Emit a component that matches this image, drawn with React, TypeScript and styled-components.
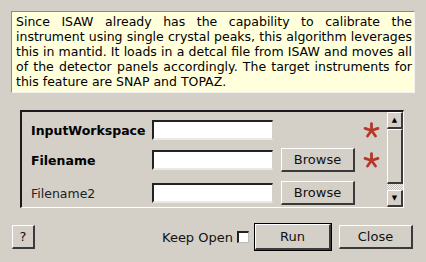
import React from "react";
import styled, { createGlobalStyle } from "styled-components";

const GlobalStyle = createGlobalStyle`
  html, body { margin: 0; padding: 0; background: #d4d0c8; }
  body { font-family: "DejaVu Sans", "Liberation Sans", sans-serif; font-size: 12px; color: #000; }
`;

const Page = styled.div`
  width: 426px;
  height: 262px;
  box-sizing: border-box;
  padding: 11px 11px 0 11px;
  display: flex;
  flex-direction: column;
  background: #d4d0c8;
`;

const Description = styled.div`
  box-sizing: border-box;
  width: 404px;
  height: 82px;
  padding: 2px 2px 0 4px;
  background: #ffffdc;
  border-top: 1px solid #8c8a85;
  border-left: 1px solid #8c8a85;
  border-right: 1px solid #f4f2ee;
  border-bottom: 1px solid #f4f2ee;
  text-align: justify;
  line-height: 15px;
  font-size: 12.5px;
`;

const Panel = styled.div`
  box-sizing: border-box;
  margin: 17px 0 0 9px;
  width: 384px;
  height: 98px;
  display: flex;
  border-top: 2px solid #1a1a1a;
  border-left: 2px solid #1a1a1a;
  border-right: 1px solid #fff;
  border-bottom: 1px solid #fff;
  overflow: hidden;
`;

const Fields = styled.div`
  flex: 1;
  display: flex;
  flex-direction: column;
  padding: 6px 0 0 9px;
`;

const Row = styled.div<{ $space: number }>`
  display: flex;
  align-items: center;
  height: 24px;
  margin-bottom: ${(p) => p.$space}px;
`;

const Label = styled.div<{ $bold?: boolean }>`
  width: 121px;
  font-size: 12.5px;
  font-weight: ${(p) => (p.$bold ? "bold" : "normal")};
  color: ${(p) => (p.$bold ? "#000" : "#222")};
`;

const Input = styled.div`
  box-sizing: border-box;
  width: 121px;
  height: 20px;
  background: #fff;
  border-top: 2px solid #222;
  border-left: 2px solid #222;
  border-right: 1px solid #d4d0c8;
  border-bottom: 2px solid #ece9e3;
`;

const Button = styled.div<{ $w: number; $h?: number; $default?: boolean }>`
  box-sizing: border-box;
  width: ${(p) => p.$w}px;
  height: ${(p) => p.$h ?? 24}px;
  display: flex;
  align-items: center;
  justify-content: center;
  background: #d4d0c8;
  border-top: 1px solid #fff;
  border-left: 1px solid #fff;
  border-right: 2px solid #3a3a3a;
  border-bottom: 2px solid #3a3a3a;
  outline: ${(p) => (p.$default ? "1px solid #000" : "none")};
  font-size: 13px;
  color: #111;
`;

const BrowseButton = styled(Button)`
  margin-left: 8px;
`;

const Star = styled.svg`
  margin-left: 8px;
  width: 17px;
  height: 17px;
`;

const Scrollbar = styled.div`
  width: 16px;
  display: flex;
  flex-direction: column;
`;

const ArrowButton = styled.div`
  box-sizing: border-box;
  height: 17px;
  display: flex;
  align-items: center;
  justify-content: center;
  border-top: 1px solid #fff;
  border-left: 1px solid #fff;
  border-right: 2px solid #3a3a3a;
  border-bottom: 2px solid #3a3a3a;
  font-size: 7px;
`;

const Handle = styled.div`
  box-sizing: border-box;
  height: 57px;
  border-top: 1px solid #fff;
  border-left: 1px solid #fff;
  border-right: 2px solid #3a3a3a;
  border-bottom: 2px solid #3a3a3a;
`;

const Track = styled.div`
  height: 6px;
  background-color: #ecebe8;
  background-image: repeating-conic-gradient(#c4c1bb 0 25%, #f2f1ee 0 50%);
  background-size: 2px 2px;
`;

const Footer = styled.div`
  margin-top: 16px;
  display: flex;
  align-items: center;
  padding-left: 1px;
`;

const KeepOpen = styled.div`
  margin-left: 127px;
  display: flex;
  align-items: center;
  gap: 4px;
  font-size: 13px;
  color: #111;
`;

const Check = styled.div`
  box-sizing: border-box;
  width: 12px;
  height: 12px;
  background: #fff;
  border-top: 2px solid #222;
  border-left: 2px solid #222;
  border-right: 1px solid #bbb;
  border-bottom: 1px solid #bbb;
`;

const RunButton = styled(Button)`
  margin-left: 6px;
`;

const CloseButton = styled(Button)`
  margin-left: 8px;
`;

const Asterisk = () => (
  <Star viewBox="0 0 18 18">
    {[0, 72, 144, 216, 288].map((a) => (
      <line
        key={a}
        x1="9"
        y1="9"
        x2="9"
        y2="1.8"
        stroke="#b3392b"
        strokeWidth="3"
        strokeLinecap="round"
        transform={`rotate(${a} 9 9)`}
      />
    ))}
  </Star>
);

const rows = [
  { label: "InputWorkspace", bold: true, browse: false, required: true, space: 6 },
  { label: "Filename", bold: true, browse: true, required: true, space: 9 },
  { label: "Filename2", bold: false, browse: true, required: false, space: 0 },
];

export default function App() {
  return (
    <Page>
      <GlobalStyle />
      <Description>
        Since ISAW already has the capability to calibrate the instrument using single crystal peaks, this
        algorithm leverages this in mantid. It loads in a detcal file from ISAW and moves all of the detector
        panels accordingly. The target instruments for this feature are SNAP and TOPAZ.
      </Description>
      <Panel>
        <Fields>
          {rows.map((r) => (
            <Row key={r.label} $space={r.space}>
              <Label $bold={r.bold}>{r.label}</Label>
              <Input />
              {r.browse ? <BrowseButton $w={74}>Browse</BrowseButton> : <div style={{ width: 82 }} />}
              {r.required && <Asterisk />}
            </Row>
          ))}
        </Fields>
        <Scrollbar>
          <ArrowButton>▲</ArrowButton>
          <Handle />
          <Track />
          <ArrowButton>▼</ArrowButton>
        </Scrollbar>
      </Panel>
      <Footer>
        <Button $w={23}>?</Button>
        <KeepOpen>
          Keep Open
          <Check />
        </KeepOpen>
        <RunButton $w={76} $h={26} $default>
          Run
        </RunButton>
        <CloseButton $w={74}>Close</CloseButton>
      </Footer>
    </Page>
  );
}
